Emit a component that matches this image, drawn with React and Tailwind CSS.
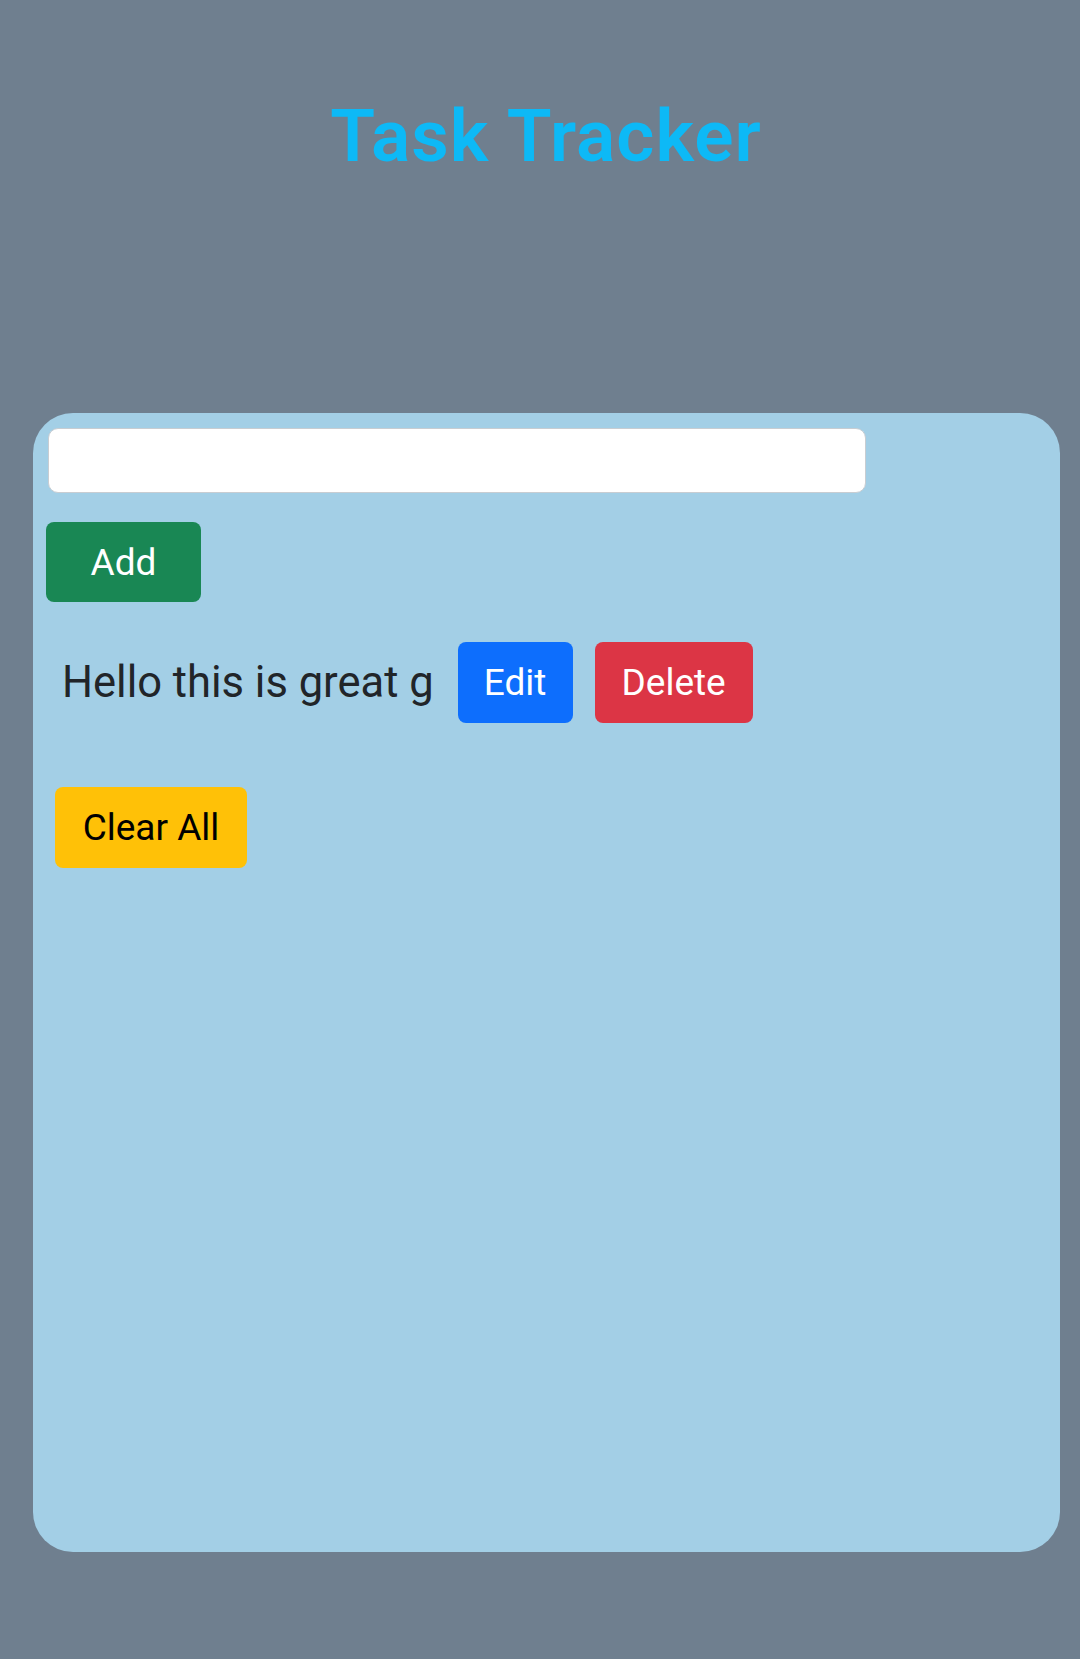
export default function App() {
  return (
    <div
      className="min-h-[1659px] bg-[#6f7f8f] pt-[100px]"
      style={{ fontFamily: 'Roboto, "Noto Sans", sans-serif' }}
    >
      <h1 className="text-center text-[73px] leading-[73px] font-semibold tracking-[1px] text-[#0db9f6] pl-[12px]">
        Task Tracker
      </h1>
      <div className="mt-[240px] ml-[33px] w-[1027px] h-[1139px] bg-[#a3cfe6] rounded-[40px] pt-[15px] pl-[15px]">
        <input
          type="text"
          className="block w-[818px] h-[65px] bg-white border border-[#c8cdd2] rounded-[10px] outline-none"
        />
        <button className="block mt-[29px] ml-[-2px] w-[155px] h-[80px] bg-[#198754] text-white text-[37px] leading-none rounded-[8px]">
          Add
        </button>
        <div className="flex items-center mt-[40px] pl-[14px]">
          <span className="text-[43.5px] leading-none text-[#212529]">Hello this is great g</span>
          <button className="ml-[24px] w-[115px] h-[81px] bg-[#0d6efd] text-white text-[37px] leading-none rounded-[8px]">
            Edit
          </button>
          <button className="ml-[22px] w-[158px] h-[81px] bg-[#dc3545] text-white text-[37px] leading-none rounded-[8px]">
            Delete
          </button>
        </div>
        <button className="block mt-[64px] ml-[7px] w-[192px] h-[81px] bg-[#ffc107] text-black text-[37px] leading-none rounded-[8px]">
          Clear All
        </button>
      </div>
    </div>
  );
}
